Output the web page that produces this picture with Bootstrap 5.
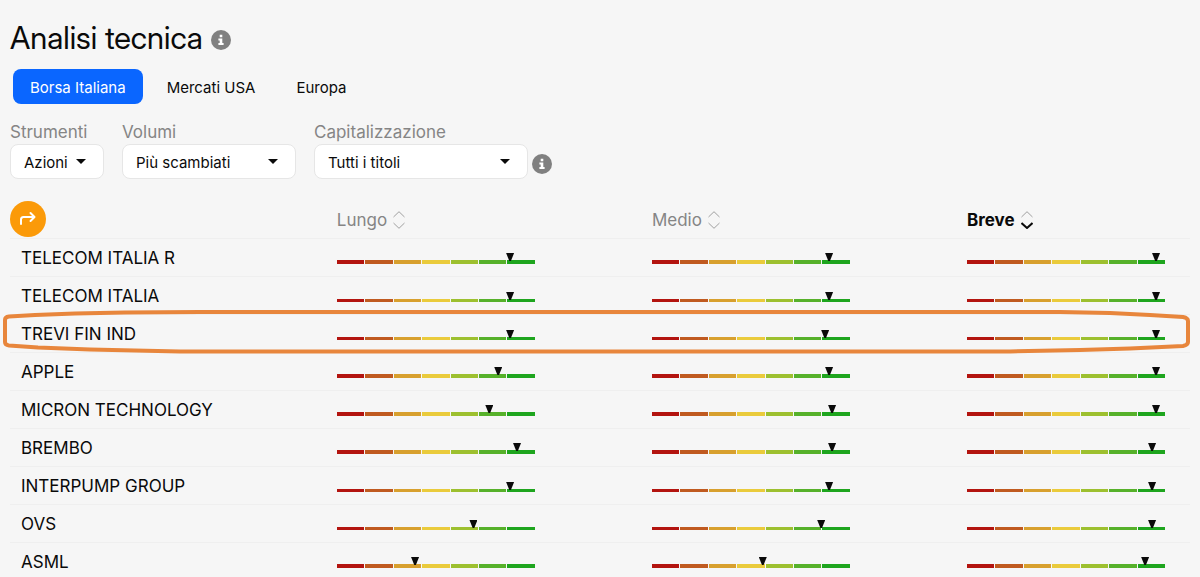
<!DOCTYPE html>
<html lang="it">
<head>
<meta charset="utf-8">
<meta name="viewport" content="width=device-width, initial-scale=1">
<title>Analisi tecnica</title>
<link href="https://cdn.jsdelivr.net/npm/bootstrap@5.3.0/dist/css/bootstrap.min.css" rel="stylesheet">
<style>
  body { background: #f6f6f6; color: #0a0a0a; font-family: Inter, "Liberation Sans", sans-serif; font-size: 15px; overflow-x: hidden; }
  .page { padding: 20px 10px 0; }
  .page-title { font-family: "Inter Display", Inter, "Liberation Sans", sans-serif; font-size: 31px; line-height: 36px; font-weight: 400; }
  .info-btn { width: 20px; height: 20px; }
  .info-btn svg { display: block; }
  .markets { margin: 13px 0 0 3px; gap: 7px; }
  .markets .nav-link { padding: 0 17px; height: 35px; border-radius: 8px; color: #0a0a0a; line-height: 37px; }
  .markets .nav-link.active { background: #0a66ff; color: #fff; }
  .filters { margin-top: 16px; gap: 18px; }
  .filters label { font-size: 17px; line-height: 24px; color: #858585; }
  .filters .form-select {
    height: 35px; padding: 2px 36px 0 13px; border: 1px solid #e6e6e6; border-radius: 8px; color: #0a0a0a; font-size: 15px; line-height: 31px;
    background: #fff url("data:image/svg+xml,%3Csvg xmlns='http://www.w3.org/2000/svg' viewBox='0 0 10 5'%3E%3Cpath d='M0 0h10L5 5z' fill='%230a0a0a'/%3E%3C/svg%3E") no-repeat right 17px center / 10px 5px;
  }
  .filters .pick-short { width: 94px; padding-right: 28px; }
  .filters .pick-mid { width: 174px; }
  .filters .pick-long { width: 214px; }
  .ratings { table-layout: fixed; margin-top: 21px; width: 100%; }
  .ratings th, .ratings td { padding: 0; height: 38px; border-bottom: 1px solid #efefef; vertical-align: middle; font-weight: 400; }
  .ratings thead th { height: 38px; }
  .ratings tbody th { padding: 2px 0 0 11px; font-size: 17px; line-height: 24px; }
  .c-name { width: 27.7%; } .c-mid { width: 26.7%; }
  .sort { margin-top: 2px; font-size: 17px; line-height: 24px; color: #858585; gap: 6px; }
  .sort.current { color: #0a0a0a; font-weight: 700; }
  .go { width: 36px; height: 36px; background: #fb9a09; }
  .gauge { position: relative; display: grid; grid-template-columns: repeat(7, 1fr); gap: 1px; width: 198px; height: 4px; margin-top: 10px; }
  .gauge.slim { height: 3px; margin-top: 11px; }
  .gauge i:nth-child(1) { background: #b3140f; }
  .gauge i:nth-child(2) { background: #c05a20; }
  .gauge i:nth-child(3) { background: #d8a02e; }
  .gauge i:nth-child(4) { background: #eacb3c; }
  .gauge i:nth-child(5) { background: #9dc02f; }
  .gauge i:nth-child(6) { background: #56b12a; }
  .gauge i:nth-child(7) { background: #1ea51e; }
  .gauge b { position: absolute; bottom: 3px; width: 8px; height: 8px; margin-left: -4px; background: #0a0a0a; clip-path: polygon(0 0, 100% 0, 60% 100%, 40% 100%); }
  .gauge.slim b { bottom: 2px; }
  .picked { position: relative; }
  .ring { position: absolute; left: -10px; top: -6px; width: calc(100% + 20px); height: 48px; pointer-events: none; }
</style>
</head>
<body>
<main class="page">
  <div class="d-flex align-items-center gap-2">
    <h1 class="page-title mb-0">Analisi tecnica</h1>
    <button type="button" class="info-btn border-0 bg-transparent p-0 mt-1" aria-label="Informazioni">
      <svg width="20" height="20" viewBox="0 0 20 20"><circle cx="10" cy="10" r="10" fill="#808080"/><path d="M8.700 4.800h2.600v2.400h-2.600zM7.400 8.500h3.900v4.500h1.300v1.900H7.400V13h1.300v-2.600H7.400z" fill="#fff"/></svg>
    </button>
  </div>

  <nav class="nav nav-pills markets">
    <a class="nav-link active" aria-current="page" href="#">Borsa Italiana</a>
    <a class="nav-link" href="#">Mercati USA</a>
    <a class="nav-link" href="#">Europa</a>
  </nav>

  <form class="filters d-flex align-items-end">
    <div class="d-flex flex-column">
      <label for="strumenti">Strumenti</label>
      <select id="strumenti" class="form-select pick-short"><option>Azioni</option></select>
    </div>
    <div class="d-flex flex-column">
      <label for="volumi">Volumi</label>
      <select id="volumi" class="form-select pick-mid"><option>Più scambiati</option></select>
    </div>
    <div class="d-flex flex-column">
      <label for="cap">Capitalizzazione</label>
      <div class="d-flex align-items-center gap-1">
        <select id="cap" class="form-select pick-long"><option>Tutti i titoli</option></select>
        <button type="button" class="info-btn border-0 bg-transparent p-0 mt-1" aria-label="Informazioni sulla capitalizzazione">
          <svg width="20" height="20" viewBox="0 0 20 20"><circle cx="10" cy="10" r="10" fill="#808080"/><path d="M8.700 4.800h2.600v2.400h-2.600zM7.400 8.500h3.900v4.500h1.300v1.900H7.400V13h1.300v-2.600H7.400z" fill="#fff"/></svg>
        </button>
      </div>
    </div>
  </form>

  <table class="ratings">
    <colgroup><col class="c-name"><col class="c-mid"><col class="c-mid"><col></colgroup>
    <thead>
      <tr>
        <th scope="col">
          <button type="button" class="go d-flex align-items-center justify-content-center border-0 rounded-circle p-0" aria-label="Vai">
            <svg width="18" height="16" viewBox="0 0 18 16" fill="none" stroke="#fff" stroke-width="2" stroke-linecap="round" stroke-linejoin="round"><path d="M2 13V8.500Q2 6 4.500 6H15M11.500 2l4 4-4 4"/></svg>
          </button>
        </th>
        <th scope="col"><button type="button" class="sort d-flex align-items-center border-0 bg-transparent p-0">Lungo
          <svg width="12" height="18" viewBox="0 0 12 18" fill="none" stroke="#a0a0a0"><path d="M.5 6L6 .7 11.500 6M.5 12L6 17.300 11.500 12"/></svg></button></th>
        <th scope="col"><button type="button" class="sort d-flex align-items-center border-0 bg-transparent p-0">Medio
          <svg width="12" height="18" viewBox="0 0 12 18" fill="none" stroke="#a0a0a0"><path d="M.5 6L6 .7 11.500 6M.5 12L6 17.300 11.500 12"/></svg></button></th>
        <th scope="col" aria-sort="descending"><button type="button" class="sort current d-flex align-items-center border-0 bg-transparent p-0">Breve
          <svg width="12" height="18" viewBox="0 0 12 18" fill="none" stroke="#a0a0a0"><path d="M.5 6L6 .7 11.500 6"/><path d="M.5 12L6 17 11.500 12" stroke="#0a0a0a" stroke-width="2"/></svg></button></th>
      </tr>
    </thead>
    <tbody id="rows"></tbody>
  </table>
</main>

<template id="ring">
  <svg class="ring" viewBox="0 0 1200 48" preserveAspectRatio="none" fill="none" stroke="#e8863c" stroke-width="4" stroke-linejoin="round" aria-hidden="true">
    <path d="M5 12Q5 9 9 8.500L35 7 75 5.500 125 4.500 200 4H1060L1110 5 1150 7 1183 9Q1188 10 1188 13V34Q1188 37 1183 38L1130 40.500 1080 42 1010 43.500H180L90 41.500 38 39.500 9 37.500Q5 37 5 34Z" vector-effect="non-scaling-stroke"/>
  </svg>
</template>

<script src="https://cdn.jsdelivr.net/npm/bootstrap@5.3.0/dist/js/bootstrap.bundle.min.js"></script>
<script>
  // name, [long, medium, short] scores in percent, slim bar, highlighted
  const stocks = [
    ["TELECOM ITALIA R", [87.5, 89.5, 95.5], false],
    ["TELECOM ITALIA", [87.5, 89.5, 95.5], true],
    ["TREVI FIN IND", [87.5, 87.5, 95.5], true, true],
    ["APPLE", [81.5, 89.5, 95.5], false],
    ["MICRON TECHNOLOGY", [77, 91, 95.5], false],
    ["BREMBO", [91, 91, 93.5], false],
    ["INTERPUMP GROUP", [87.5, 89.5, 93.5], true],
    ["OVS", [69, 85.5, 93.5], true],
    ["ASML", [39.5, 56, 90], false]
  ];
  const ring = document.getElementById("ring").innerHTML;
  document.getElementById("rows").innerHTML = stocks.map(([name, scores, slim, picked]) =>
    `<tr${picked ? ' class="picked"' : ""}><th scope="row">${name}${picked ? ring : ""}</th>` +
    scores.map(s => `<td><div class="gauge${slim ? " slim" : ""}">${"<i></i>".repeat(7)}<b style="left:${s}%"></b></div></td>`).join("") +
    "</tr>").join("");
</script>
</body>
</html>
